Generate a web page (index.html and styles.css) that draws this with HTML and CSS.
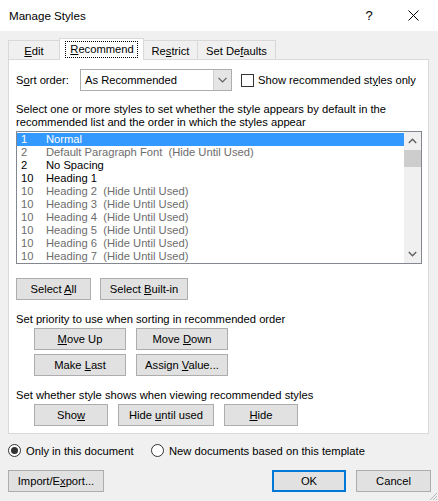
FILE: index.html
```html
<!DOCTYPE html>
<html>
<head>
<meta charset="utf-8">
<title>Manage Styles</title>
<link rel="stylesheet" href="styles.css">
</head>
<body>
<div class="titlebar">
  <span class="title">Manage Styles</span>
  <span class="help">?</span>
  <span class="close"><svg width="11" height="11" viewBox="0 0 11 11"><path d="M0.5 0.5L10.5 10.5M10.5 0.5L0.5 10.5" stroke="#000" stroke-width="1" fill="none"/></svg></span>
</div>
<div class="client">
  <div class="tabs">
    <div class="tab t-edit"><span><u>E</u>dit</span></div>
    <div class="tab t-rec active"><span class="focus"><u>R</u>ecommend</span></div>
    <div class="tab t-res"><span>Re<u>s</u>trict</span></div>
    <div class="tab t-def"><span>Set De<u>f</u>aults</span></div>
  </div>
  <div class="panel">
    <div class="sortrow">
      <span class="lbl">S<u>o</u>rt order:</span>
      <div class="combo">
        <span class="combo-text">As Recommended</span>
        <span class="combo-btn"><svg width="9" height="6" viewBox="0 0 9 6"><path d="M0.5 0.8L4.5 4.8L8.5 0.8" stroke="#5f5f5f" stroke-width="1.2" fill="none"/></svg></span>
      </div>
      <span class="check"><span class="box"></span><span>Show recommended st<u>y</u>les only</span></span>
    </div>
    <p class="desc">Select one or more styles to set whether the style appears by default in the<br>recommended list and the order in which the styles appear</p>
    <div class="listbox">
      <div class="rows">
        <div class="row sel"><span class="num">1</span><span class="name">Normal</span></div>
        <div class="row dim"><span class="num">2</span><span class="name">Default Paragraph Font  (Hide Until Used)</span></div>
        <div class="row"><span class="num">2</span><span class="name">No Spacing</span></div>
        <div class="row"><span class="num">10</span><span class="name">Heading 1</span></div>
        <div class="row dim"><span class="num">10</span><span class="name">Heading 2  (Hide Until Used)</span></div>
        <div class="row dim"><span class="num">10</span><span class="name">Heading 3  (Hide Until Used)</span></div>
        <div class="row dim"><span class="num">10</span><span class="name">Heading 4  (Hide Until Used)</span></div>
        <div class="row dim"><span class="num">10</span><span class="name">Heading 5  (Hide Until Used)</span></div>
        <div class="row dim"><span class="num">10</span><span class="name">Heading 6  (Hide Until Used)</span></div>
        <div class="row dim"><span class="num">10</span><span class="name">Heading 7  (Hide Until Used)</span></div>
      </div>
      <div class="scrollbar">
        <span class="sb-btn"><svg width="9" height="6" viewBox="0 0 9 6"><path d="M0.8 5L4.5 1.3L8.2 5" stroke="#606060" stroke-width="1.4" fill="none"/></svg></span>
        <span class="sb-thumb"></span>
        <span class="sb-track"></span>
        <span class="sb-btn"><svg width="9" height="6" viewBox="0 0 9 6"><path d="M0.8 1L4.5 4.7L8.2 1" stroke="#606060" stroke-width="1.4" fill="none"/></svg></span>
      </div>
    </div>
    <div class="btnrow r-select">
      <div class="btn w-all"><span>Select <u>A</u>ll</span></div>
      <div class="btn w-builtin"><span>Select <u>B</u>uilt-in</span></div>
    </div>
    <p class="caption c-priority">Set priority to use when sorting in recommended order</p>
    <div class="btnrow indent">
      <div class="btn w-move"><span><u>M</u>ove Up</span></div>
      <div class="btn w-move"><span>Move <u>D</u>own</span></div>
    </div>
    <div class="btnrow indent r-second">
      <div class="btn w-move"><span>Make <u>L</u>ast</span></div>
      <div class="btn w-move"><span>Assign <u>V</u>alue...</span></div>
    </div>
    <p class="caption c-show">Set whether style shows when viewing recommended styles</p>
    <div class="btnrow indent">
      <div class="btn w-show"><span>Sho<u>w</u></span></div>
      <div class="btn w-hideuntil"><span>Hide <u>u</u>ntil used</span></div>
      <div class="btn w-hide"><span><u>H</u>ide</span></div>
    </div>
  </div>
  <div class="radios">
    <span class="radio-item r-first"><span class="radio on"></span><span>Only in this document</span></span>
    <span class="radio-item"><span class="radio"></span><span>New documents based on this template</span></span>
  </div>
  <div class="footer">
    <div class="btn w-import"><span>Import/E<u>x</u>port...</span></div>
    <div class="spacer"></div>
    <div class="btn w-ok default"><span>OK</span></div>
    <div class="btn w-cancel"><span>Cancel</span></div>
  </div>
</div>
<svg class="grip" width="10" height="10" viewBox="0 0 10 10"><path d="M9 2L2 9M9 5L5 9M9 8L8 9" stroke="#b5b5b5" stroke-width="1" fill="none"/></svg>
</body>
</html>
```
FILE: styles.css
```css
* { box-sizing: border-box; }
html, body { margin: 0; padding: 0; }
body {
  width: 438px;
  height: 501px;
  overflow: hidden;
  background: #f0f0f0;
  font-family: "Liberation Sans", Arial, sans-serif;
  font-size: 11.2px;
  color: #000;
  position: relative;
}
u { text-decoration: underline; text-underline-offset: 1px; }

.titlebar {
  height: 31px;
  background: #fff;
  display: flex;
  align-items: center;
}
.title { margin-left: 9px; flex: 1; font-size: 11.6px; }
.help { width: 10px; font-size: 13px; text-align: center; margin-right: 34px; }
.close { width: 11px; height: 11px; display: flex; margin-right: 19px; }

.client { padding: 7px 9px 0 8px; }

.tabs { display: flex; align-items: flex-end; height: 21px; }
.tab {
  height: 19px;
  border: 1px solid #d9d9d9;
  border-bottom: none;
  background: #f0f0f0;
  display: flex;
  justify-content: center;
  align-items: center;
  padding-top: 2px;
  margin-left: -1px;
}
.t-edit { width: 52px; margin-left: 0; }
.t-rec { width: 85px; }
.t-res { width: 55px; }
.t-def { width: 79px; }
.tab.active {
  height: 22px;
  margin-bottom: -1px;
  background: #fff;
  position: relative;
  z-index: 1;
  padding-top: 0;
}
.focus {
  border: 1px dotted #000;
  padding: 1px 3px 1px 4px;
  line-height: 13px;
}

.panel {
  width: 421px;
  height: 375px;
  border: 1px solid #d9d9d9;
  background: #fff;
  padding: 9px 6px 0 7px;
}

.sortrow { display: flex; align-items: center; height: 22px; }
.lbl { width: 64px; }
.combo {
  width: 152px;
  height: 22px;
  border: 1px solid #adadad;
  display: flex;
  background: #fff;
}
.combo-text { flex: 1; padding-left: 4px; display: flex; align-items: center; }
.combo-btn {
  width: 18px;
  background: #e5e5e5;
  border-left: 1px solid #d0d0d0;
  display: flex;
  align-items: center;
  justify-content: center;
}
.check { display: flex; align-items: center; margin-left: 9px; }
.box {
  width: 13px;
  height: 13px;
  border: 1px solid #333;
  background: #fff;
  margin-right: 4px;
}

.desc { margin: 12px 0 2px; line-height: 13px; }

.listbox {
  width: 406px;
  height: 133px;
  border: 1px solid #828790;
  display: flex;
}
.rows { flex: 1; padding-top: 1px; }
.row { height: 13px; display: flex; align-items: center; white-space: pre; line-height: 13px; }
.row.sel { background: #3399ff; color: #fff; }
.row.dim { color: #6d6d6d; }
.num { width: 29px; padding-left: 4px; }
.scrollbar {
  width: 17px;
  background: #f0f0f0;
  display: flex;
  flex-direction: column;
}
.sb-btn { height: 18px; display: flex; align-items: center; justify-content: center; }
.sb-thumb { height: 17px; background: #cdcdcd; }
.sb-track { flex: 1; }

.btnrow { display: flex; gap: 10px; }
.r-select { margin-top: 14px; gap: 9px; }
.indent { margin-left: 18px; }
.r-second { margin-top: 4px; }
.btn {
  height: 22px;
  border: 1px solid #adadad;
  background: #e1e1e1;
  display: flex;
  align-items: center;
  justify-content: center;
  white-space: nowrap;
}
.w-all { width: 75px; }
.w-builtin { width: 88px; }
.w-move { width: 92px; }
.w-show { width: 74px; }
.w-hideuntil { width: 96px; }
.w-hide { width: 74px; }

.caption { margin: 0; line-height: 13px; }
.c-priority { margin: 13px 0 2px; }
.c-show { margin: 13px 0 2px; }

.radios { display: flex; align-items: center; height: 13px; margin-top: 10px; }
.radio-item { display: flex; align-items: center; }
.r-first { width: 143px; }
.radio {
  width: 13px;
  height: 13px;
  border: 1px solid #333;
  border-radius: 50%;
  background: #fff;
  margin-right: 5px;
  display: flex;
  align-items: center;
  justify-content: center;
}
.radio.on::after {
  content: "";
  width: 7px;
  height: 7px;
  border-radius: 50%;
  background: #333;
}

.footer { display: flex; margin-top: 13px; margin-right: -2px; gap: 10px; }
.spacer { flex: 1; }
.w-import { width: 96px; }
.w-ok { width: 74px; }
.w-cancel { width: 75px; }
.btn.default { border: 2px solid #0078d7; }

.grip { position: absolute; right: 0; bottom: 0; }
```
